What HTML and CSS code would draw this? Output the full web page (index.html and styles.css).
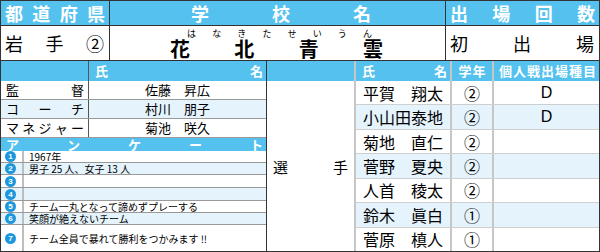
FILE: index.html
```html
<!DOCTYPE html>
<html lang="ja">
<head>
<meta charset="utf-8">
<title>花北青雲</title>
<link rel="stylesheet" href="styles.css">
</head>
<body>
<div class="sheet">
  <div class="top">
    <div class="tcol pref">
      <div class="hd spread"><span>都</span><span>道</span><span>府</span><span>県</span></div>
      <div class="val spread"><span>岩</span><span>手</span><span>②</span></div>
    </div>
    <div class="tcol school">
      <div class="hd spread school-hd"><span>学</span><span>校</span><span>名</span></div>
      <div class="val school-val">
        <div class="ruby spread"><span>は</span><span>な</span><span>き</span><span>た</span><span>せ</span><span>い</span><span>う</span><span>ん</span></div>
        <div class="kanji spread"><span>花</span><span>北</span><span>青</span><span>雲</span></div>
      </div>
    </div>
    <div class="tcol count">
      <div class="hd spread"><span>出</span><span>場</span><span>回</span><span>数</span></div>
      <div class="val spread count-val"><span>初</span><span>出</span><span>場</span></div>
    </div>
  </div>
  <div class="bottom">
    <div class="staff">
      <div class="srow shd"><div class="lab"></div><div class="nm spread hdtext"><span>氏</span><span>名</span></div></div>
      <div class="srow"><div class="lab spread"><span>監</span><span>督</span></div><div class="nm">佐藤　昇広</div></div>
      <div class="srow alt"><div class="lab spread"><span>コ</span><span>ー</span><span>チ</span></div><div class="nm">村川　朋子</div></div>
      <div class="srow"><div class="lab spread"><span>マ</span><span>ネ</span><span>ジ</span><span>ャ</span><span>ー</span></div><div class="nm">菊池　咲久</div></div>
      <div class="qhd spread hdtext"><span>ア</span><span>ン</span><span>ケ</span><span>ー</span><span>ト</span></div>
      <div class="qrow h12"><div class="qn"><span class="num">1</span></div><div class="qt">1967年</div></div>
      <div class="qrow h12 alt"><div class="qn"><span class="num">2</span></div><div class="qt">男子 25 人、女子 13 人</div></div>
      <div class="qrow h13"><div class="qn"><span class="num">3</span></div><div class="qt"></div></div>
      <div class="qrow h13 alt"><div class="qn"><span class="num">4</span></div><div class="qt"></div></div>
      <div class="qrow h12"><div class="qn"><span class="num">5</span></div><div class="qt">チーム一丸となって諦めずプレーする</div></div>
      <div class="qrow h12 alt"><div class="qn"><span class="num">6</span></div><div class="qt">笑顔が絶えないチーム</div></div>
      <div class="qrow last"><div class="qn"><span class="num">7</span></div><div class="qt">チーム全員で暴れて勝利をつかみます !!</div></div>
    </div>
    <div class="sen">
      <div class="sen-hd"></div>
      <div class="sen-body spread"><span>選</span><span>手</span></div>
    </div>
    <div class="players">
      <div class="prow phd hdtext">
        <div class="pn spread"><span>氏</span><span>名</span></div>
        <div class="pg pg-hd"><span>学</span><span>年</span></div>
        <div class="pe spread"><span>個</span><span>人</span><span>戦</span><span>出</span><span>場</span><span>種</span><span>目</span></div>
      </div>
      <div class="prow"><div class="pn">平賀　翔太</div><div class="pg">②</div><div class="pe">D</div></div>
      <div class="prow alt"><div class="pn">小山田泰地</div><div class="pg">②</div><div class="pe">D</div></div>
      <div class="prow"><div class="pn">菊地　直仁</div><div class="pg">②</div><div class="pe"></div></div>
      <div class="prow alt"><div class="pn">菅野　夏央</div><div class="pg">②</div><div class="pe"></div></div>
      <div class="prow"><div class="pn">人首　稜太</div><div class="pg">②</div><div class="pe"></div></div>
      <div class="prow alt"><div class="pn">鈴木　眞白</div><div class="pg">①</div><div class="pe"></div></div>
      <div class="prow"><div class="pn">菅原　槙人</div><div class="pg">①</div><div class="pe"></div></div>
    </div>
  </div>
</div>
</body>
</html>
```

FILE: styles.css
```css
* { box-sizing: border-box; margin: 0; padding: 0; }
html, body { width: 600px; height: 252px; overflow: hidden; background: #fff; }
body { font-family: "Noto Sans CJK JP", "Noto Sans", sans-serif; color: #000; }

.sheet {
  width: 600px; height: 252px;
  border: 1px solid #333;
  display: flex; flex-direction: column;
}
.spread { display: flex; justify-content: space-between; align-items: center; }

/* top block */
.top { display: flex; height: 60px; border-bottom: 1px solid #333; flex: none; }
.tcol { display: flex; flex-direction: column; }
.pref { width: 109px; border-right: 1px solid #333; }
.school { width: 336px; border-right: 1px solid #333; }
.count { flex: 1; }
.hd {
  height: 25px; background: #55c1ee; border-bottom: 1px solid #333;
  color: #fff; font-weight: bold; font-size: 18px; line-height: 24px;
  padding: 0 4px 0 4px; flex: none;
}
.school-hd { padding: 0 74px 0 81px; }
.val { flex: 1; font-size: 18px; line-height: 20px; padding: 0 5px 0 4px; }
.count-val { padding: 0 5px 0 4px; }
.school-val { display: flex; flex-direction: column; padding: 0; }
.ruby { font-size: 9px; line-height: 9px; height: 9px; margin-top: 3px; padding: 0 73px 0 77px; }
.kanji { font-size: 20px; font-weight: bold; line-height: 20px; height: 20px; padding: 0 62px 0 60px; margin-top: 1px; }

/* bottom */
.bottom { flex: 1; display: flex; min-height: 0; overflow: hidden; }
.hdtext { color: #fff; font-weight: bold; font-size: 13px; }

.staff { width: 266px; border-right: 1px solid #333; display: flex; flex-direction: column; }
.srow { display: flex; height: 19px; flex: none; border-bottom: 1px solid #999; font-size: 13px; line-height: 18px; }
.shd { height: 20px; background: #55c1ee; border-bottom: 0; }
.lab { width: 88px; border-right: 1px solid #555; padding: 0 4px 0 5px; }
.nm { flex: 1; text-align: center; }
.shd .nm { padding: 0 3px 0 6px; }
.alt { background: #e5f3fc; }
.qhd { height: 13px; flex: none; background: #55c1ee; padding: 0 3px 0 5px; line-height: 13px; }
.qrow { display: flex; flex: none; border-bottom: 1px solid #999; font-size: 10px; }
.h12 { height: 12px; }
.h13 { height: 13px; }
.qrow.last { flex: 1; border-bottom: 0; }
.qn { width: 23px; border-right: 2px solid #bdbdbd; display: flex; align-items: center; padding-left: 4px; }
.num {
  width: 11px; height: 11px; border-radius: 50%; background: #1c97dd; color: #fff;
  font-family: "Liberation Sans", sans-serif; font-weight: bold; font-size: 8px; line-height: 11px; text-align: center;
}
.qt { flex: 1; padding-left: 5px; display: flex; align-items: center; line-height: 11px; white-space: nowrap; }

.sen { width: 89px; border-right: 2px solid #c6c6c6; display: flex; flex-direction: column; }
.sen-hd { height: 20px; flex: none; background: #55c1ee; }
.sen-body { flex: 1; font-size: 15px; padding: 0 6px 0 6px; }

.players { flex: 1; display: flex; flex-direction: column; min-height: 0; }
.prow { flex: 1 1 0; min-height: 0; display: flex; border-bottom: 1px solid #cfcfcf; font-size: 16px; line-height: 18px; align-items: stretch; }
.prow:last-child { border-bottom: 0; }
.prow.phd { flex: none; height: 20px; background: #55c1ee; border-bottom: 0; font-size: 13px; }
.pn { width: 96px; border-right: 2px solid #c6c6c6; display: flex; align-items: center; justify-content: center; }
.phd .pn { justify-content: space-between; padding: 0 3px 0 6px; }
.pg { width: 42px; border-right: 2px solid #c6c6c6; display: flex; align-items: center; justify-content: center; }
.pg-hd { gap: 1px; }
.pe { flex: 1; display: flex; align-items: center; justify-content: center; font-family: "Liberation Sans", sans-serif; }
.phd .pe { justify-content: space-between; padding: 0 3px 0 5px; font-family: "Noto Sans CJK JP", sans-serif; }
```
